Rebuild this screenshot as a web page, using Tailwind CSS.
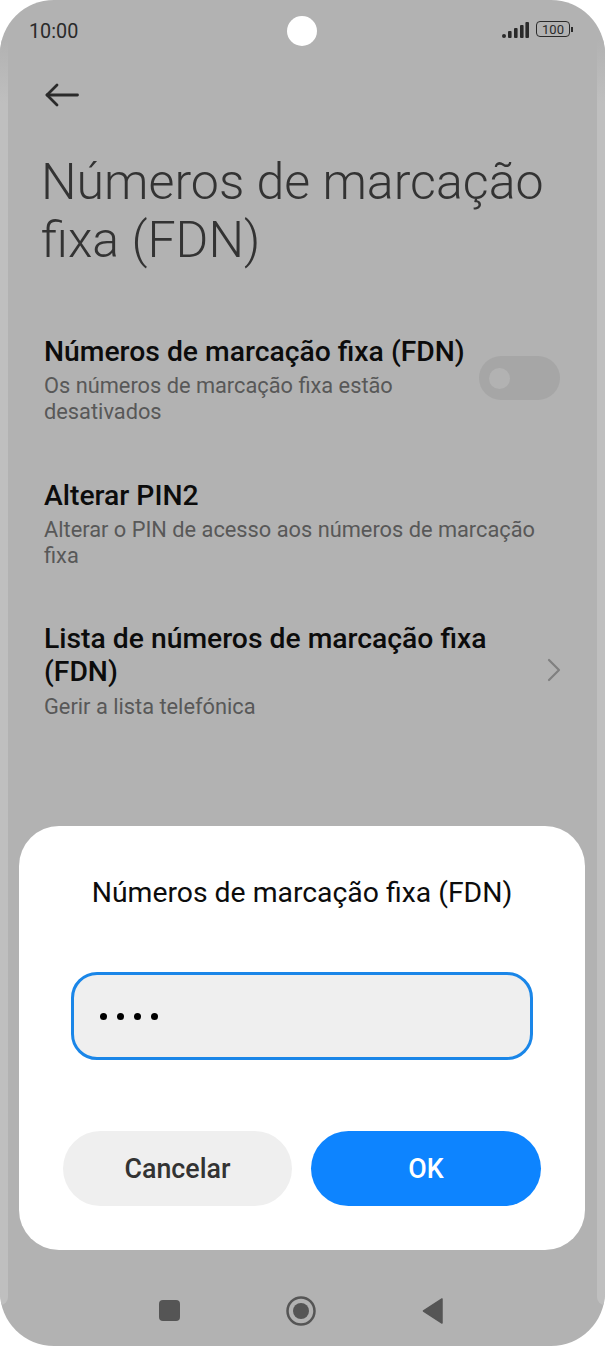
<!DOCTYPE html>
<html><head><meta charset="utf-8"><script src="https://cdn.jsdelivr.net/npm/@tailwindcss/browser@4"></script></head>
<body class="bg-white">
<div class="relative w-[605px] h-[1346px] overflow-hidden rounded-[54px] bg-[#b2b2b2] font-['Roboto',sans-serif]">
  <div class="absolute left-0 top-[40px] w-[8px] h-[1265px] rounded-br-[8px] bg-gradient-to-b from-[#b2b2b2] via-[#bfbfbf] via-5% to-[#bfbfbf]"></div>
  <div class="absolute right-0 top-[40px] w-[8px] h-[1265px] rounded-bl-[8px] bg-gradient-to-b from-[#b2b2b2] via-[#bfbfbf] via-5% to-[#bfbfbf]"></div>

  <div class="relative h-[62px] pt-[18px] pl-[29px] pr-[32px] flex items-start justify-between">
    <span class="text-[19.8px] leading-[28px] text-[#2a2a2a]">10:00</span>
    <div class="flex items-start gap-[7px] mt-[3px]">
      <svg width="27" height="17" viewBox="0 0 27 17" fill="#2a2a2a"><rect x="0" y="13" width="4" height="4" rx="2"/><rect x="6" y="10" width="3.6" height="7" rx="1"/><rect x="12" y="7" width="3.6" height="10" rx="1"/><rect x="18" y="4" width="3.6" height="13" rx="1"/><rect x="23.4" y="1" width="3.6" height="16" rx="1"/></svg>
      <div class="flex items-center gap-[1px]">
        <div class="w-[34px] h-[16px] rounded-[4px] border-[1.5px] border-[#2a2a2a] flex items-center justify-center text-[13px] leading-none text-[#2a2a2a]">100</div>
        <div class="w-[2px] h-[5px] bg-[#2a2a2a]"></div>
      </div>
    </div>
  </div>
  <div class="absolute left-[287px] top-[16px] w-[30px] h-[30px] rounded-full bg-white"></div>

  <div class="relative pl-[45px] pt-[21px] h-[44px]">
    <svg width="34" height="24" viewBox="0 0 34 24" fill="none" stroke="#2a2a2a" stroke-width="2.8" stroke-linecap="round" stroke-linejoin="round" class="block"><path d="M32.5 12H2"/><path d="M12 2 L2 12 L12 22"/></svg>
  </div>

  <h1 class="relative mt-[47px] pl-[41px] pr-[50px] text-[50.1px] leading-[58px] font-light text-[#333]">Números de marcação fixa (FDN)</h1>

  <div class="relative mt-[66px] pl-[44px] pr-[45px] flex items-center justify-between">
    <div class="w-[425px]">
      <div class="text-[28.3px] leading-[33px] font-medium text-[#0c0c0c] whitespace-nowrap">Números de marcação fixa (FDN)</div>
      <div class="text-[21.8px] leading-[26px] text-[#585858] mt-[5px]">Os números de marcação fixa estão desativados</div>
    </div>
    <div class="w-[81px] h-[44px] rounded-full bg-[#a6a6a6] flex items-center pl-[10px] -mt-[4px]">
      <div class="w-[21px] h-[21px] rounded-full bg-[#b2b2b2]"></div>
    </div>
  </div>

  <div class="relative mt-[54px] pl-[44px] pr-[50px]">
    <div class="text-[28.3px] leading-[33px] font-medium text-[#0c0c0c]">Alterar PIN2</div>
    <div class="text-[21.8px] leading-[26px] text-[#585858] mt-[5px]">Alterar o PIN de acesso aos números de marcação fixa</div>
  </div>

  <div class="relative mt-[53px] pl-[44px] pr-[44px] flex items-center justify-between">
    <div class="w-[470px]">
      <div class="text-[28.3px] leading-[33px] font-medium text-[#0c0c0c]">Lista de números de marcação fixa (FDN)</div>
      <div class="text-[21.8px] leading-[26px] text-[#585858] mt-[6px]">Gerir a lista telefónica</div>
    </div>
    <svg width="14" height="24" viewBox="0 0 14 24" fill="none" stroke="#808080" stroke-width="2.2" stroke-linecap="round" stroke-linejoin="round" class="mt-[-2px]"><path d="M2 2 L12 12 L2 22"/></svg>
  </div>

  <div class="absolute left-[19px] top-[826px] w-[566px] h-[424px] rounded-[40px] bg-white px-[44px] pt-[50px]">
    <div class="text-center text-[28.35px] leading-[33px] text-[#0c0c0c] whitespace-nowrap">Números de marcação fixa (FDN)</div>
    <div class="mt-[63px] mx-[8px] h-[88px] rounded-[26px] border-[3px] border-[#1a86e8] bg-[#efefef] flex items-center pl-[26px] pt-[1px] gap-[10px]">
      <span class="w-[7px] h-[7px] rounded-full bg-black"></span><span class="w-[7px] h-[7px] rounded-full bg-black"></span><span class="w-[7px] h-[7px] rounded-full bg-black"></span><span class="w-[7px] h-[7px] rounded-full bg-black"></span>
    </div>
    <div class="mt-[71px] flex justify-between">
      <div class="w-[229px] h-[75px] rounded-full bg-[#efefef] flex items-center justify-center pt-[2px] text-[26.8px] font-medium text-[#333]">Cancelar</div>
      <div class="w-[230px] h-[75px] rounded-full bg-[#0d84ff] flex items-center justify-center pt-[2px] text-[26.8px] font-medium text-white">OK</div>
    </div>
  </div>

  <div class="absolute left-0 right-0 top-[1290px] h-[42px] flex items-center">
    <svg class="absolute left-[158px] top-[10px]" width="22" height="22" viewBox="0 0 22 22" fill="#555"><rect x="1" y="0" width="21" height="21" rx="4"/></svg>
    <svg class="absolute left-[286px] top-[6px]" width="30" height="30" viewBox="0 0 30 30"><circle cx="15" cy="15" r="13.5" fill="none" stroke="#555" stroke-width="2.5"/><circle cx="15" cy="15" r="8" fill="#555"/></svg>
    <svg class="absolute left-[422px] top-[8px]" width="24" height="26" viewBox="0 0 24 26" fill="#555" stroke="#555" stroke-width="1.5" stroke-linejoin="round"><path d="M1.5 13 L20 1 V25 Z"/></svg>
  </div>
</div>
</body></html>
